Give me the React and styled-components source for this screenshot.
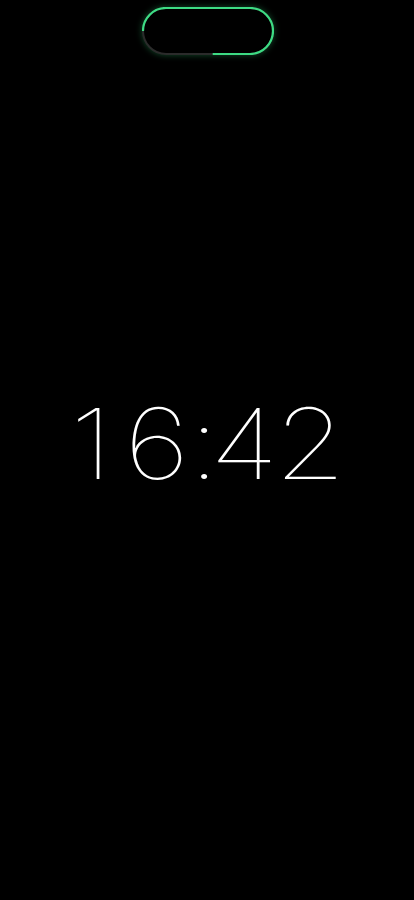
import React from "react";
import styled, { createGlobalStyle } from "styled-components";

const Global = createGlobalStyle`
  html, body {
    margin: 0;
    padding: 0;
    background: #000;
  }
`;

const Screen = styled.div`
  width: 414px;
  height: 900px;
  background: #000;
  display: flex;
  flex-direction: column;
  align-items: center;
  padding-top: 7px;
  box-sizing: border-box;
  overflow: hidden;
`;

const Island = styled.svg`
  display: block;
  margin-left: 1px;
  filter: drop-shadow(0 0 3px rgba(52, 211, 120, 0.35));
`;

const Clock = styled.div`
  margin-top: 340px;
  display: flex;
  font-family: Inter, "Noto Sans", sans-serif;
  font-weight: 100;
  font-size: 98px;
  line-height: 1;
  color: #fff;
  transform: scaleX(1.18);
`;

// per-glyph tracking, tuned to the reference's spacing
const Glyph = styled.span`
  letter-spacing: ${(p) => p.$track}px;
`;

const PILL = "M1,24 A23,23 0 0 1 24,1 H108 A23,23 0 0 1 131,24 A23,23 0 0 1 108,47 H24 A23,23 0 0 1 1,24";

const TIME = [
  { ch: "1", track: 10 },
  { ch: "6", track: -1 },
  { ch: ":", track: -8.5 },
  { ch: "4", track: -3.5 },
  { ch: "2", track: -1 },
];

function App() {
  return (
    <>
      <Global />
      <Screen>
        <Island width="132" height="48" viewBox="0 0 132 48">
          <path d={PILL} fill="#000" stroke="#2b2b2b" strokeWidth="2" />
          <path
            d={PILL}
            fill="none"
            stroke="#3ddc84"
            strokeWidth="2.2"
            strokeDasharray="229 400"
          />
        </Island>
        <Clock>
          {TIME.map((g, i) => (
            <Glyph key={i} $track={g.track}>
              {g.ch}
            </Glyph>
          ))}
        </Clock>
      </Screen>
    </>
  );
}

export default App;
